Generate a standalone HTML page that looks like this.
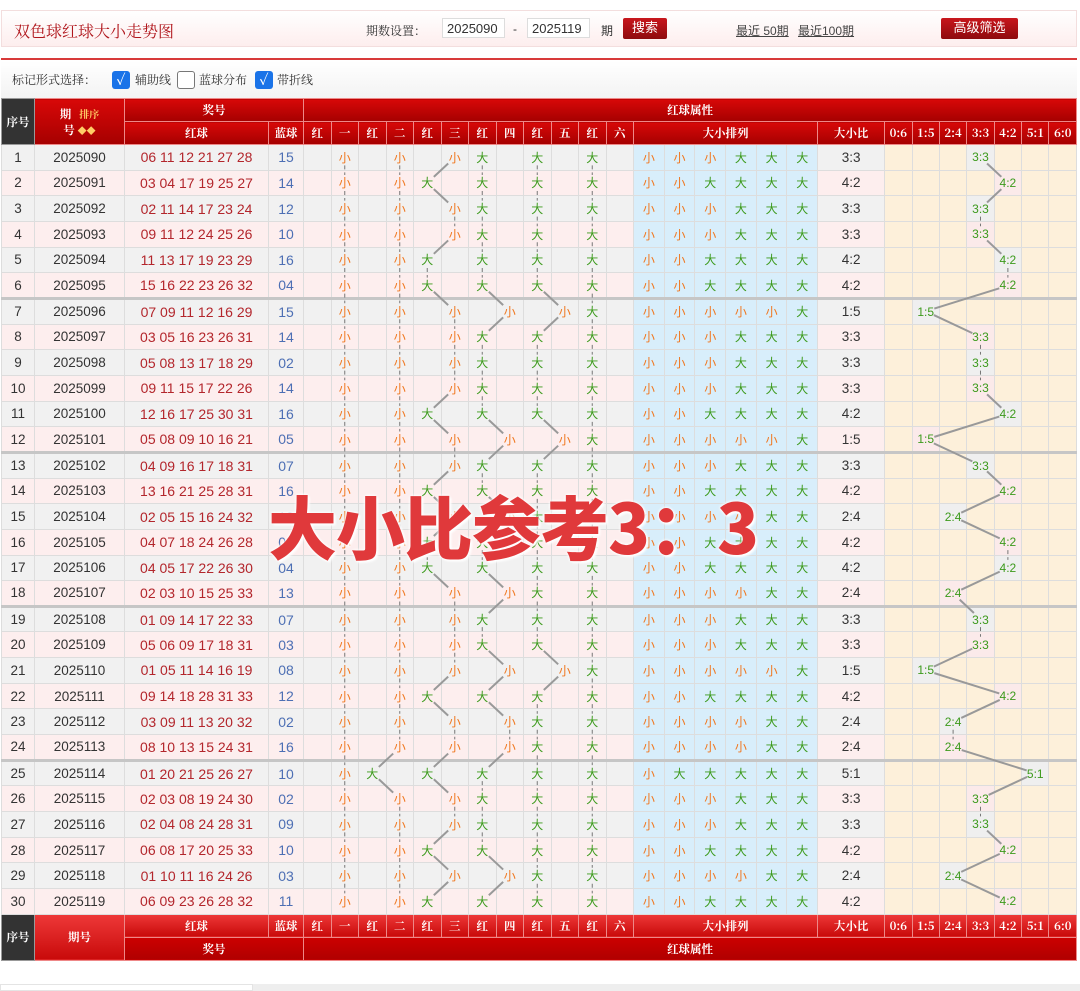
<!DOCTYPE html>
<html><head><meta charset="utf-8">
<style>
*{margin:0;padding:0;box-sizing:border-box}
body{width:1080px;height:991px;background:#fff;font-family:"Liberation Sans","Noto Sans CJK SC",sans-serif;position:relative;overflow:hidden;color:#333}
.top{position:absolute;left:1px;top:10px;width:1076px;height:37px;border:1px solid #f3dede;background:linear-gradient(#fff,#fdeeee);font-size:12px}
.top .tt{position:absolute;left:12px;top:8px;font-family:"Noto Serif CJK SC",serif;font-size:16px;color:#b0161c}
.top span{position:absolute;top:11px}
.inp{position:absolute;top:7px;height:20px;background:#fff;border:1px solid #ddd;font-size:13px;padding:2px 4px}
.btn{position:absolute;top:7px;height:21px;background:linear-gradient(#c8161c,#8e0b0e);color:#fff;font-size:13px;text-align:center;line-height:20px;border-radius:2px}
.lnk{text-decoration:underline;color:#444}
.rl{position:absolute;left:1px;top:58px;width:1076px;height:2px;background:#d83a3a}
.opt{position:absolute;left:1px;top:61px;width:1076px;height:37px;background:linear-gradient(#fff,#f3f3f3);font-size:12px;font-family:"Noto Serif CJK SC",serif;color:#333}
.opt span{position:absolute;top:10px}
.cb{position:absolute;top:10px;width:18px;height:18px;border-radius:3px;background:#1a73e8;color:#fff;font-size:14px;line-height:18px;text-align:center;font-weight:bold}
.cb.u{background:#fff;border:1px solid #777}
table{position:absolute;left:1px;top:98px;border-collapse:collapse;table-layout:fixed;width:1076px;font-size:13.5px}
td,th{text-align:center;white-space:nowrap;overflow:hidden;border:1px solid #ddd;padding:0}
th{color:#fff;font-weight:bold;font-size:11.5px;height:23px;background:linear-gradient(#d80808,#a50000);border:1px solid #e88;font-family:"Noto Serif CJK SC",serif}
th.k{background:#333;border-color:#999}
tfoot th{background:linear-gradient(#ee3838,#c80a0a)}
tfoot tr:last-child th{background:linear-gradient(#cc0000,#b00000)}
tbody tr{height:25.66px}
tbody tr.o td{background:#f1f1f1}
tbody tr.e td{background:#fdeeee}
tbody tr.t td{border-top:3px solid #c6c6c6}
tbody td:nth-child(n+5){color:#3c9a1c;font-size:12px}
tbody td:nth-child(n+6):nth-child(-n+16):nth-child(even){color:#f07820}
tbody td:nth-child(n+17):nth-child(-n+22){background:#d8eefb!important}
tbody td:nth-child(n+24){background:#fdf0da!important}
tbody tr.o td.m{background:#efefef!important}
tbody tr.e td.m{background:#fbeaea!important}
tbody td:nth-child(23){color:#333;font-size:13.5px}
tbody td:nth-child(3){color:#b3262c;font-size:14px}
tbody td:nth-child(4){color:#4d6fb4;font-size:14px}
x{color:#f07820}
svg{position:absolute;left:0;top:0}
.big{position:absolute;left:268px;top:484px;font-size:69px;font-weight:900;color:#e0393b;font-family:"Noto Sans CJK SC",sans-serif;letter-spacing:-1px;text-shadow:0 0 3px #fff,0 0 3px #fff,2px 2px 2px #fff;line-height:80px}
.bot{position:absolute;left:0;top:984px;width:1080px;height:7px;background:#eee}
.bot div{width:253px;height:7px;background:#fff;border:1px solid #e4e4e4}
</style></head><body>
<div class="top"><div class="tt">双色球红球大小走势图</div>
<span style="left:364px;font-family:'Noto Serif CJK SC',serif">期数设置：</span>
<div class="inp" style="left:440px;width:63px">2025090</div>
<span style="left:511px">-</span>
<div class="inp" style="left:525px;width:63px">2025119</div>
<span style="left:599px">期</span>
<div class="btn" style="left:621px;width:44px">搜索</div>
<span style="left:734px" class="lnk">最近 50期</span><span style="left:796px" class="lnk">最近100期</span>
<div class="btn" style="left:939px;width:77px">高级筛选</div>
</div>
<div class="rl"></div>
<div class="opt"><span style="left:11px">标记形式选择：</span>
<div class="cb" style="left:111px">✓</div><span style="left:134px">辅助线</span>
<div class="cb u" style="left:176px"></div><span style="left:198px">蓝球分布</span>
<div class="cb" style="left:254px">✓</div><span style="left:276px">带折线</span></div>

<table id="t">
<colgroup><col style="width:33px"><col style="width:90px"><col style="width:144px"><col style="width:35px">
<col span="12" style="width:27.5px"><col span="6" style="width:30.7px"><col style="width:67px"><col span="7" style="width:27.4px"></colgroup>
<thead>
<tr><th rowspan="2" class="k">序号</th><th rowspan="2">期<span style="font-size:10px;color:#fc6;margin-left:8px">排序</span><br>号 <span style="font-size:9px;color:#fc6">◆◆</span></th><th colspan="2">奖号</th><th colspan="26">红球属性</th></tr>
<tr><th>红球</th><th>蓝球</th><th>红</th><th>一</th><th>红</th><th>二</th><th>红</th><th>三</th><th>红</th><th>四</th><th>红</th><th>五</th><th>红</th><th>六</th><th colspan="6">大小排列</th><th>大小比</th><th>0:6</th><th>1:5</th><th>2:4</th><th>3:3</th><th>4:2</th><th>5:1</th><th>6:0</th></tr>
</thead>
<tbody>
<tr class="o"><td>1<td>2025090<td>06 11 12 21 27 28<td>15<td><td>小<td><td>小<td><td>小<td>大<td><td>大<td><td>大<td><td><x>小</x><td><x>小</x><td><x>小</x><td>大<td>大<td>大<td>3:3<td><td><td><td class="m">3:3<td><td><td></tr>
<tr class="e"><td>2<td>2025091<td>03 04 17 19 25 27<td>14<td><td>小<td><td>小<td>大<td><td>大<td><td>大<td><td>大<td><td><x>小</x><td><x>小</x><td>大<td>大<td>大<td>大<td>4:2<td><td><td><td><td class="m">4:2<td><td></tr>
<tr class="o"><td>3<td>2025092<td>02 11 14 17 23 24<td>12<td><td>小<td><td>小<td><td>小<td>大<td><td>大<td><td>大<td><td><x>小</x><td><x>小</x><td><x>小</x><td>大<td>大<td>大<td>3:3<td><td><td><td class="m">3:3<td><td><td></tr>
<tr class="e"><td>4<td>2025093<td>09 11 12 24 25 26<td>10<td><td>小<td><td>小<td><td>小<td>大<td><td>大<td><td>大<td><td><x>小</x><td><x>小</x><td><x>小</x><td>大<td>大<td>大<td>3:3<td><td><td><td class="m">3:3<td><td><td></tr>
<tr class="o"><td>5<td>2025094<td>11 13 17 19 23 29<td>16<td><td>小<td><td>小<td>大<td><td>大<td><td>大<td><td>大<td><td><x>小</x><td><x>小</x><td>大<td>大<td>大<td>大<td>4:2<td><td><td><td><td class="m">4:2<td><td></tr>
<tr class="e"><td>6<td>2025095<td>15 16 22 23 26 32<td>04<td><td>小<td><td>小<td>大<td><td>大<td><td>大<td><td>大<td><td><x>小</x><td><x>小</x><td>大<td>大<td>大<td>大<td>4:2<td><td><td><td><td class="m">4:2<td><td></tr>
<tr class="o t"><td>7<td>2025096<td>07 09 11 12 16 29<td>15<td><td>小<td><td>小<td><td>小<td><td>小<td><td>小<td>大<td><td><x>小</x><td><x>小</x><td><x>小</x><td><x>小</x><td><x>小</x><td>大<td>1:5<td><td class="m">1:5<td><td><td><td><td></tr>
<tr class="e"><td>8<td>2025097<td>03 05 16 23 26 31<td>14<td><td>小<td><td>小<td><td>小<td>大<td><td>大<td><td>大<td><td><x>小</x><td><x>小</x><td><x>小</x><td>大<td>大<td>大<td>3:3<td><td><td><td class="m">3:3<td><td><td></tr>
<tr class="o"><td>9<td>2025098<td>05 08 13 17 18 29<td>02<td><td>小<td><td>小<td><td>小<td>大<td><td>大<td><td>大<td><td><x>小</x><td><x>小</x><td><x>小</x><td>大<td>大<td>大<td>3:3<td><td><td><td class="m">3:3<td><td><td></tr>
<tr class="e"><td>10<td>2025099<td>09 11 15 17 22 26<td>14<td><td>小<td><td>小<td><td>小<td>大<td><td>大<td><td>大<td><td><x>小</x><td><x>小</x><td><x>小</x><td>大<td>大<td>大<td>3:3<td><td><td><td class="m">3:3<td><td><td></tr>
<tr class="o"><td>11<td>2025100<td>12 16 17 25 30 31<td>16<td><td>小<td><td>小<td>大<td><td>大<td><td>大<td><td>大<td><td><x>小</x><td><x>小</x><td>大<td>大<td>大<td>大<td>4:2<td><td><td><td><td class="m">4:2<td><td></tr>
<tr class="e"><td>12<td>2025101<td>05 08 09 10 16 21<td>05<td><td>小<td><td>小<td><td>小<td><td>小<td><td>小<td>大<td><td><x>小</x><td><x>小</x><td><x>小</x><td><x>小</x><td><x>小</x><td>大<td>1:5<td><td class="m">1:5<td><td><td><td><td></tr>
<tr class="o t"><td>13<td>2025102<td>04 09 16 17 18 31<td>07<td><td>小<td><td>小<td><td>小<td>大<td><td>大<td><td>大<td><td><x>小</x><td><x>小</x><td><x>小</x><td>大<td>大<td>大<td>3:3<td><td><td><td class="m">3:3<td><td><td></tr>
<tr class="e"><td>14<td>2025103<td>13 16 21 25 28 31<td>16<td><td>小<td><td>小<td>大<td><td>大<td><td>大<td><td>大<td><td><x>小</x><td><x>小</x><td>大<td>大<td>大<td>大<td>4:2<td><td><td><td><td class="m">4:2<td><td></tr>
<tr class="o"><td>15<td>2025104<td>02 05 15 16 24 32<td>12<td><td>小<td><td>小<td><td>小<td><td>小<td>大<td><td>大<td><td><x>小</x><td><x>小</x><td><x>小</x><td><x>小</x><td>大<td>大<td>2:4<td><td><td class="m">2:4<td><td><td><td></tr>
<tr class="e"><td>16<td>2025105<td>04 07 18 24 26 28<td>08<td><td>小<td><td>小<td>大<td><td>大<td><td>大<td><td>大<td><td><x>小</x><td><x>小</x><td>大<td>大<td>大<td>大<td>4:2<td><td><td><td><td class="m">4:2<td><td></tr>
<tr class="o"><td>17<td>2025106<td>04 05 17 22 26 30<td>04<td><td>小<td><td>小<td>大<td><td>大<td><td>大<td><td>大<td><td><x>小</x><td><x>小</x><td>大<td>大<td>大<td>大<td>4:2<td><td><td><td><td class="m">4:2<td><td></tr>
<tr class="e"><td>18<td>2025107<td>02 03 10 15 25 33<td>13<td><td>小<td><td>小<td><td>小<td><td>小<td>大<td><td>大<td><td><x>小</x><td><x>小</x><td><x>小</x><td><x>小</x><td>大<td>大<td>2:4<td><td><td class="m">2:4<td><td><td><td></tr>
<tr class="o t"><td>19<td>2025108<td>01 09 14 17 22 33<td>07<td><td>小<td><td>小<td><td>小<td>大<td><td>大<td><td>大<td><td><x>小</x><td><x>小</x><td><x>小</x><td>大<td>大<td>大<td>3:3<td><td><td><td class="m">3:3<td><td><td></tr>
<tr class="e"><td>20<td>2025109<td>05 06 09 17 18 31<td>03<td><td>小<td><td>小<td><td>小<td>大<td><td>大<td><td>大<td><td><x>小</x><td><x>小</x><td><x>小</x><td>大<td>大<td>大<td>3:3<td><td><td><td class="m">3:3<td><td><td></tr>
<tr class="o"><td>21<td>2025110<td>01 05 11 14 16 19<td>08<td><td>小<td><td>小<td><td>小<td><td>小<td><td>小<td>大<td><td><x>小</x><td><x>小</x><td><x>小</x><td><x>小</x><td><x>小</x><td>大<td>1:5<td><td class="m">1:5<td><td><td><td><td></tr>
<tr class="e"><td>22<td>2025111<td>09 14 18 28 31 33<td>12<td><td>小<td><td>小<td>大<td><td>大<td><td>大<td><td>大<td><td><x>小</x><td><x>小</x><td>大<td>大<td>大<td>大<td>4:2<td><td><td><td><td class="m">4:2<td><td></tr>
<tr class="o"><td>23<td>2025112<td>03 09 11 13 20 32<td>02<td><td>小<td><td>小<td><td>小<td><td>小<td>大<td><td>大<td><td><x>小</x><td><x>小</x><td><x>小</x><td><x>小</x><td>大<td>大<td>2:4<td><td><td class="m">2:4<td><td><td><td></tr>
<tr class="e"><td>24<td>2025113<td>08 10 13 15 24 31<td>16<td><td>小<td><td>小<td><td>小<td><td>小<td>大<td><td>大<td><td><x>小</x><td><x>小</x><td><x>小</x><td><x>小</x><td>大<td>大<td>2:4<td><td><td class="m">2:4<td><td><td><td></tr>
<tr class="o t"><td>25<td>2025114<td>01 20 21 25 26 27<td>10<td><td>小<td>大<td><td>大<td><td>大<td><td>大<td><td>大<td><td><x>小</x><td>大<td>大<td>大<td>大<td>大<td>5:1<td><td><td><td><td><td class="m">5:1<td></tr>
<tr class="e"><td>26<td>2025115<td>02 03 08 19 24 30<td>02<td><td>小<td><td>小<td><td>小<td>大<td><td>大<td><td>大<td><td><x>小</x><td><x>小</x><td><x>小</x><td>大<td>大<td>大<td>3:3<td><td><td><td class="m">3:3<td><td><td></tr>
<tr class="o"><td>27<td>2025116<td>02 04 08 24 28 31<td>09<td><td>小<td><td>小<td><td>小<td>大<td><td>大<td><td>大<td><td><x>小</x><td><x>小</x><td><x>小</x><td>大<td>大<td>大<td>3:3<td><td><td><td class="m">3:3<td><td><td></tr>
<tr class="e"><td>28<td>2025117<td>06 08 17 20 25 33<td>10<td><td>小<td><td>小<td>大<td><td>大<td><td>大<td><td>大<td><td><x>小</x><td><x>小</x><td>大<td>大<td>大<td>大<td>4:2<td><td><td><td><td class="m">4:2<td><td></tr>
<tr class="o"><td>29<td>2025118<td>01 10 11 16 24 26<td>03<td><td>小<td><td>小<td><td>小<td><td>小<td>大<td><td>大<td><td><x>小</x><td><x>小</x><td><x>小</x><td><x>小</x><td>大<td>大<td>2:4<td><td><td class="m">2:4<td><td><td><td></tr>
<tr class="e"><td>30<td>2025119<td>06 09 23 26 28 32<td>11<td><td>小<td><td>小<td>大<td><td>大<td><td>大<td><td>大<td><td><x>小</x><td><x>小</x><td>大<td>大<td>大<td>大<td>4:2<td><td><td><td><td class="m">4:2<td><td></tr>
</tbody>
<tfoot>
<tr><th rowspan="2" class="k">序号</th><th rowspan="2">期号</th><th>红球</th><th>蓝球</th><th>红</th><th>一</th><th>红</th><th>二</th><th>红</th><th>三</th><th>红</th><th>四</th><th>红</th><th>五</th><th>红</th><th>六</th><th colspan="6">大小排列</th><th>大小比</th><th>0:6</th><th>1:5</th><th>2:4</th><th>3:3</th><th>4:2</th><th>5:1</th><th>6:0</th></tr>
<tr><th colspan="2">奖号</th><th colspan="26">红球属性</th></tr>
</tfoot>
</table>
<svg id="s" width="1080" height="991"></svg>
<div class="big">大小比参考3：3</div>
<div class="bot"><div></div></div>
<script>
(function(){
var svg=document.getElementById('s'),rows=document.querySelectorAll('#t tbody tr'),ns='http://www.w3.org/2000/svg';
function pt(td){var r=td.getBoundingClientRect();return [r.left+r.width/2,r.top+r.height/2];}
function ln(a,b){
 var l=document.createElementNS(ns,'line'),dx=b[0]-a[0],dy=b[1]-a[1],d=Math.sqrt(dx*dx+dy*dy);
 var o=(dx==0)?8:9;
 l.setAttribute('x1',a[0]+dx/d*o);l.setAttribute('y1',a[1]+dy/d*o);
 l.setAttribute('x2',b[0]-dx/d*o);l.setAttribute('y2',b[1]-dy/d*o);
 if(dx==0){l.setAttribute('stroke','#777');l.setAttribute('stroke-width','1');l.setAttribute('stroke-dasharray','4,3');}
 else{l.setAttribute('stroke','#999');l.setAttribute('stroke-width','2');}
 svg.appendChild(l);}
var cols=[];for(var p=0;p<6;p++){cols.push([4+2*p,5+2*p]);}
cols.push('r');
cols.forEach(function(c){
 var prev=null;
 for(var i=0;i<rows.length;i++){
  var tds=rows[i].children,cur=null;
  if(c==='r'){for(var k=23;k<30;k++){if(tds[k].textContent.trim())cur=pt(tds[k]);}}
  else{for(var j=0;j<2;j++){if(tds[c[j]].textContent.trim())cur=pt(tds[c[j]]);}}
  if(prev&&cur)ln(prev,cur);prev=cur;}
});
})();
</script>
</body></html>
